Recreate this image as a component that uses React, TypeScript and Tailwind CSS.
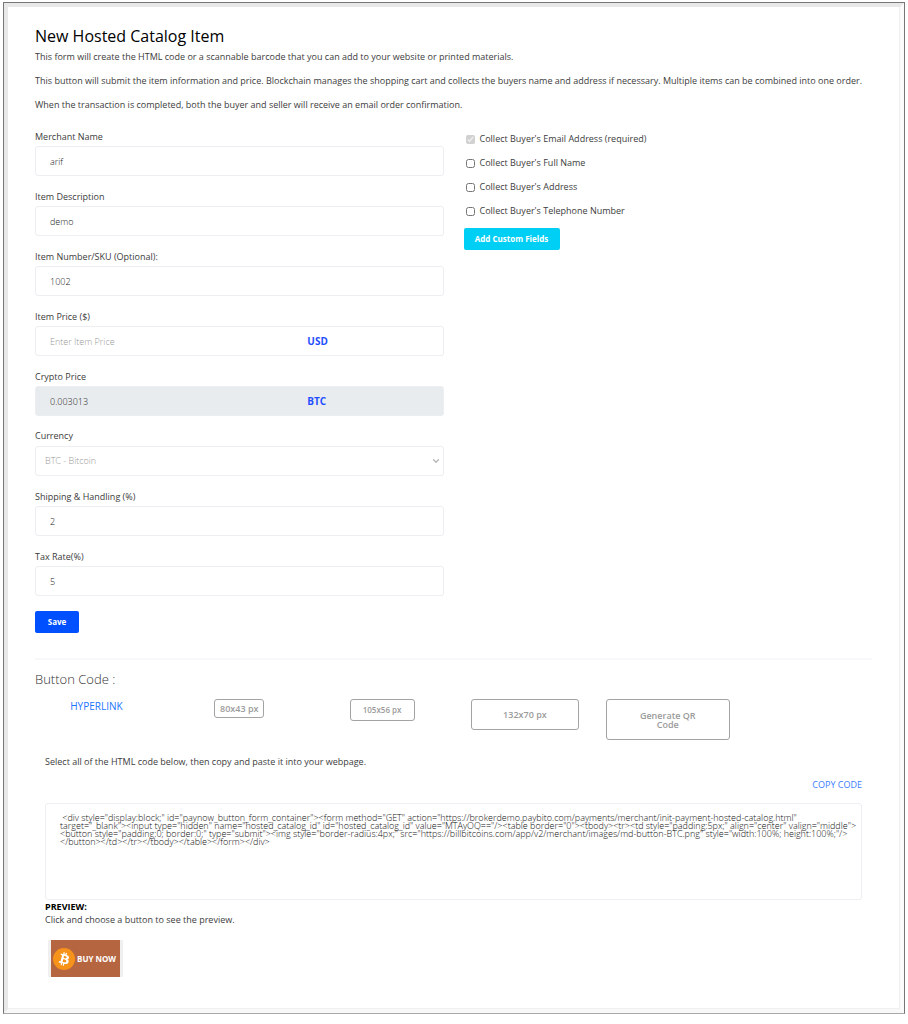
import React, { useState } from "react";
import { ChevronDown } from "lucide-react";

const INTRO = [
  "This form will create the HTML code or a scannable barcode that you can add to your website or printed materials.",
  "This button will submit the item information and price. Blockchain manages the shopping cart and collects the buyers name and address if necessary. Multiple items can be combined into one order.",
  "When the transaction is completed, both the buyer and seller will receive an email order confirmation.",
];

const BUYER_FIELDS = [
  { id: "email", label: "Collect Buyer's Email Address (required)", required: true },
  { id: "fullName", label: "Collect Buyer's Full Name" },
  { id: "address", label: "Collect Buyer's Address" },
  { id: "phone", label: "Collect Buyer's Telephone Number" },
];

const BUTTON_CODE = [
  ` <div style="display:block;" id="paynow_button_form_container"><form method="GET" action="https://brokerdemo.paybito.com/payments/merchant/init-payment-hosted-catalog.html"`,
  `target="_blank"><input type="hidden" name="hosted_catalog_id" id="hosted_catalog_id" value="MTAyOQ=="/><table border="0"><tbody><tr><td style="padding:5px;" align="center" valign="middle">`,
  `<button style="padding:0; border:0;" type="submit"><img style="border-radius:4px;" src="https://billbitcoins.com/app/v2/merchant/images/md-button-BTC.png" style="width:100%; height:100%;"/>`,
  `</button></td></tr></tbody></table></form></div>`,
].join("\n");

const sizeButton = "rounded-[3px] border border-[#a3a3a3] bg-white font-semibold text-[#9b9b9b]";

type FieldProps = {
  id: string;
  label: string;
  value?: string;
  placeholder?: string;
  unit?: string;
  disabled?: boolean;
};

function Field({ id, label, value, placeholder, unit, disabled }: FieldProps) {
  return (
    <div>
      <label htmlFor={id} className="block h-[19px] text-[9px] leading-[20px]">
        {label}
      </label>
      <div className="relative">
        <input
          id={id}
          type="text"
          defaultValue={value}
          placeholder={placeholder}
          disabled={disabled}
          className="block h-[30px] w-full rounded-[3px] border border-[#eceef2] bg-white px-[14px] text-[9px] font-light text-[#222] placeholder:text-[#999] disabled:bg-[#e9ecef]"
        />
        {unit && (
          <span className="absolute inset-y-0 left-2/3 flex items-center text-[10px] font-bold text-[#1f4fff]">
            {unit}
          </span>
        )}
      </div>
    </div>
  );
}

function BitcoinLogo() {
  return (
    <svg viewBox="0 0 32 32" className="h-[22px] w-[22px] shrink-0" aria-hidden="true">
      <circle cx="16" cy="16" r="16" fill="#f7931a" />
      <path
        fill="#fff"
        d="M23.19 14.02c.31-2.1-1.28-3.22-3.47-3.98l.71-2.84-1.73-.43-.69 2.77c-.46-.11-.92-.22-1.39-.33l.7-2.79-1.73-.43-.71 2.84c-.38-.09-.75-.17-1.1-.26l-2.39-.6-.46 1.85s1.28.3 1.26.31c.7.18.83.64.81 1.01l-.81 3.24.18.06-.18-.05-1.13 4.53c-.09.21-.3.53-.79.41.02.03-1.26-.31-1.26-.31l-.86 1.98 2.25.56 1.23.32-.71 2.88 1.73.43.71-2.84 1.38.36-.71 2.83 1.73.43.71-2.87c2.95.56 5.17.33 6.11-2.34.75-2.15-.04-3.39-1.59-4.2 1.13-.26 1.98-1 2.2-2.54zm-3.95 5.54c-.53 2.15-4.15.99-5.32.7l.95-3.81c1.17.29 4.93.87 4.37 3.11zm.54-5.57c-.49 1.95-3.5.96-4.48.72l.86-3.46c.98.24 4.12.7 3.62 2.74z"
      />
    </svg>
  );
}

export default function App() {
  const [checked, setChecked] = useState<string[]>(["email"]);

  const toggle = (id: string) =>
    setChecked((prev) => (prev.includes(id) ? prev.filter((c) => c !== id) : [...prev, id]));

  return (
    <div className="bg-white px-[3px] pt-[2px] pb-[10px] font-['Open_Sans',sans-serif] text-[#3c3c3c]">
      <main className="border border-[#777] border-b-[#a8a8a8]">
        <div className="border-4 border-[#e8e8e8] border-r-[#fbfbfb] border-b-[#f8f8f8]">
          <div className="border-r border-b border-[#f0f0f0] px-[27px] pt-[17px] pb-[31px]">
            <h1 className="text-[16px] leading-[24px] font-medium text-black">New Hosted Catalog Item</h1>
            <div className="mt-[1px] flex flex-col gap-[8px]">
              {INTRO.map((text) => (
                <p key={text} className="text-[9px] leading-[16px]">
                  {text}
                </p>
              ))}
            </div>

            <form className="mt-[14px] grid grid-cols-2 gap-5" onSubmit={(e) => e.preventDefault()}>
              <div className="flex flex-col gap-[11px]">
                <Field id="merchant" label="Merchant Name" value="arif" />
                <Field id="description" label="Item Description" value="demo" />
                <Field id="sku" label="Item Number/SKU (Optional):" value="1002" />
                <Field id="price" label="Item Price ($)" placeholder="Enter Item Price" unit="USD" />
                <Field id="crypto" label="Crypto Price" value="0.003013" unit="BTC" disabled />
                <div>
                  <label htmlFor="currency" className="block h-[19px] text-[9px] leading-[18px]">
                    Currency
                  </label>
                  <div className="relative">
                    <select
                      id="currency"
                      className="block h-[30px] w-full appearance-none rounded-[3px] border border-[#eceef2] bg-white px-[9px] text-[9px] font-light text-[#999]"
                    >
                      <option>BTC - Bitcoin</option>
                    </select>
                    <ChevronDown
                      className="pointer-events-none absolute top-[10px] right-[3px] h-[10px] w-[10px] text-[#b5b5b5]"
                      strokeWidth={3}
                    />
                  </div>
                </div>
                <Field id="shipping" label="Shipping & Handling (%)" value="2" />
                <Field id="tax" label="Tax Rate(%)" value="5" />
                <button type="submit" className="mt-1 h-[22px] w-11 rounded-[2px] bg-[#0050ff] text-[8px] font-bold text-white">
                  Save
                </button>
              </div>

              <div className="pt-1">
                <div className="flex flex-col gap-[8px] pl-[2px]">
                  {BUYER_FIELDS.map((f) => (
                    <label key={f.id} className="flex items-center gap-[5px] text-[9px] leading-[16px]">
                      <input
                        type="checkbox"
                        className="h-[9px] w-[9px]"
                        checked={checked.includes(f.id)}
                        disabled={f.required}
                        onChange={() => toggle(f.id)}
                      />
                      {f.label}
                    </label>
                  ))}
                </div>
                <button type="button" className="mt-[9px] h-[22px] w-24 rounded-[2px] bg-[#00cff5] text-[8px] font-bold text-white">
                  Add Custom Fields
                </button>
              </div>
            </form>

            <hr className="mt-[25px] border-t-2 border-[#f7f8f9]" />

            <h2 className="mt-[9px] text-[13px] leading-[20px] font-light text-[#333]">Button Code :</h2>
            <div className="-mx-[10px] mt-[10px] grid grid-cols-6 items-start justify-items-center">
              <a href="#hyperlink" className="text-[10px] leading-[14px] text-[#1a75ff]">
                HYPERLINK
              </a>
              <button type="button" className={`${sizeButton} h-[19px] w-[50px] text-[9px]`}>
                80x43 px
              </button>
              <button type="button" className={`${sizeButton} h-[22px] w-[65px] text-[8px]`}>
                105x56 px
              </button>
              <button type="button" className={`${sizeButton} h-[31px] w-[108px] text-[9px]`}>
                132x70 px
              </button>
              <button type="button" className={`${sizeButton} h-[41px] w-[124px] px-7 text-[9px] leading-[9px]`}>
                Generate QR Code
              </button>
            </div>

            <section className="mt-[14px] px-[10px]">
              <label htmlFor="code" className="block text-[9px] leading-[16px]">
                Select all of the HTML code below, then copy and paste it into your webpage.
              </label>
              <div className="mt-[7px] flex justify-end">
                <button type="button" className="text-[9px] leading-[16px] text-[#3b7cff]">
                  COPY CODE
                </button>
              </div>
              <textarea
                id="code"
                readOnly
                value={BUTTON_CODE}
                className="mt-[10px] block h-[97px] w-full resize-none rounded-[3px] border border-[#eceef2] py-[10px] pr-0 pl-[14px] text-[9px] leading-[8px] font-light text-[#111]"
              />
              <h3 className="text-[9px] leading-[13px] font-bold text-black">PREVIEW:</h3>
              <p className="text-[9px] leading-[14px]">Click and choose a button to see the preview.</p>
              <button
                type="button"
                className="mt-[13px] ml-[3px] flex h-[37px] w-[75px] items-center gap-[2px] border-x-[3px] border-[#f0f0f0] bg-[#b5653f] px-[2px] text-[8px] font-bold whitespace-nowrap text-white"
              >
                <BitcoinLogo />
                BUY NOW
              </button>
            </section>
          </div>
        </div>
      </main>
    </div>
  );
}
